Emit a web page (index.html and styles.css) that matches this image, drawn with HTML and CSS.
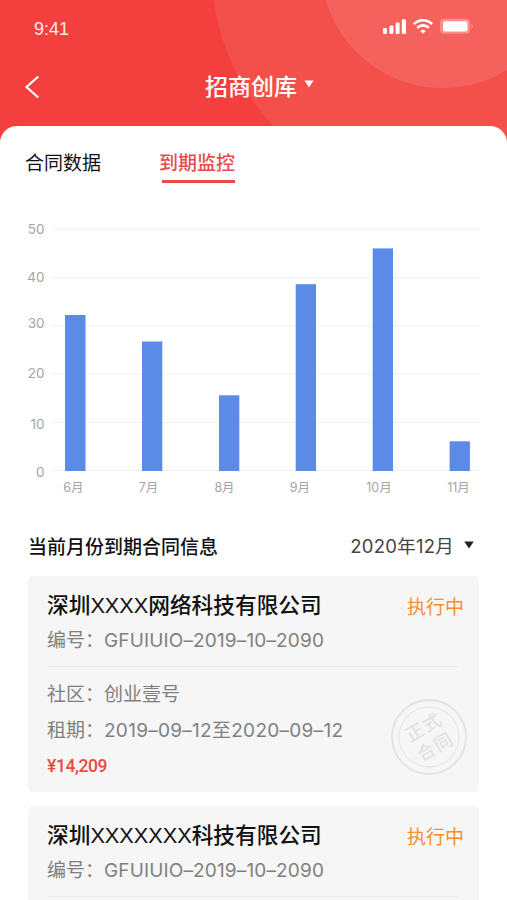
FILE: index.html
```html
<!DOCTYPE html>
<html lang="zh-CN">

<head>
    <meta charset="UTF-8">
    <meta name="viewport" content="width=device-width, initial-scale=1.0">
    <title>招商创库 - 到期监控</title>
    <link rel="stylesheet" href="styles.css">
</head>

<body>
    <div class="app">
        <header class="header">
            <div class="status-bar">
                <span class="time">9:41</span>
                <svg class="status-icons" width="94" height="18" viewBox="0 0 94 18">
                    <rect x="1" y="11" width="4" height="6" rx="1.2" />
                    <rect x="7.4" y="8.5" width="4" height="8.5" rx="1.2" />
                    <rect x="13.6" y="5.5" width="4" height="11.5" rx="1.2" />
                    <rect x="19.8" y="2.3" width="4.2" height="14.7" rx="1.2" />
                    <g class="wifi">
                        <path d="M31.8 7.1a12.8 12.8 0 0 1 18.4 0" />
                        <path d="M35.2 10.8a8.2 8.2 0 0 1 11.6 0" />
                    </g>
                    <path d="M41 16.8l-2.7-2.8a3.8 3.8 0 0 1 5.4 0z" />
                    <rect class="battery-shell" x="58" y="1.8" width="30" height="15" rx="4" />
                    <rect x="61" y="4.2" width="24.5" height="10.4" rx="1.8" />
                    <path class="battery-shell" d="M89.3 6.8v5a2.8 2.8 0 0 0 0-5z" />
                </svg>
            </div>
            <div class="nav-bar">
                <svg class="back" width="16" height="24" viewBox="0 0 16 24">
                    <path d="M14.3 1.5L2.5 12l11.8 10.5" />
                </svg>
                <h1 class="nav-title">招商创库</h1>
                <svg class="nav-arrow" width="10" height="8" viewBox="0 0 10 8">
                    <path d="M.5 .5h9L5 7.5z" />
                </svg>
            </div>
        </header>

        <main class="panel">
            <nav class="tabs">
                <a class="tab">合同数据</a>
                <a class="tab active">到期监控</a>
            </nav>

            <svg class="chart" width="507" height="290" viewBox="0 0 507 290">
                <g class="grid-lines">
                    <path d="M52 19.2H480M52 67.8H480M52 116H480M52 164H480M52 212.4H480M52 260.5H480" />
                </g>
                <g class="y-labels">
                    <text x="44.5" y="24">50</text>
                    <text x="44.5" y="72">40</text>
                    <text x="44.5" y="117.5">30</text>
                    <text x="44.5" y="168">20</text>
                    <text x="44.5" y="219">10</text>
                    <text x="44.5" y="266.5">0</text>
                </g>
                <g class="bars">
                    <rect x="65" y="105" width="20.5" height="156" />
                    <rect x="142" y="131.5" width="20.3" height="129.5" />
                    <rect x="219" y="185.3" width="20.3" height="75.7" />
                    <rect x="295.7" y="74.2" width="20.3" height="186.8" />
                    <rect x="372.7" y="38.4" width="20.3" height="222.6" />
                    <rect x="449.6" y="231.3" width="20.3" height="29.7" />
                </g>
                <g class="x-labels">
                    <text x="73.5" y="282">6月</text>
                    <text x="148.5" y="282">7月</text>
                    <text x="224.5" y="282">8月</text>
                    <text x="300" y="282">9月</text>
                    <text x="379" y="282">10月</text>
                    <text x="458.5" y="282">11月</text>
                </g>
            </svg>

            <div class="section-head">
                <h2>当前月份到期合同信息</h2>
                <div class="month-picker">
                    <span>2020年12月</span>
                    <svg width="10" height="8" viewBox="0 0 10 8">
                        <path d="M.2 .5h9.6L5 7.5z" />
                    </svg>
                </div>
            </div>

            <section class="card">
                <div class="card-head">
                    <h3>深圳XXXX网络科技有限公司</h3>
                    <span class="status">执行中</span>
                </div>
                <p class="number"><span class="label">编号：</span><span class="code">GFUIUIO–2019–10–2090</span></p>
                <div class="card-body">
                    <p><span class="label">社区：</span>创业壹号</p>
                    <p><span class="label">租期：</span><span class="dates">2019–09–12至2020–09–12</span></p>
                    <p class="price">¥14,209</p>
                    <svg class="stamp" width="78" height="78" viewBox="0 0 78 78">
                        <circle class="ring-outer" cx="39" cy="39" r="37" />
                        <circle class="ring-inner" cx="39" cy="39" r="30" />
                        <g transform="rotate(-30 39 39)">
                            <text x="39.5" y="34.5">正式</text>
                            <text x="39.5" y="57">合同</text>
                        </g>
                    </svg>
                </div>
            </section>

            <section class="card">
                <div class="card-head">
                    <h3>深圳XXXXXXX科技有限公司</h3>
                    <span class="status">执行中</span>
                </div>
                <p class="number"><span class="label">编号：</span><span class="code">GFUIUIO–2019–10–2090</span></p>
                <div class="card-body"></div>
            </section>
        </main>
    </div>
</body>

</html>
```
FILE: styles.css
```css
:root {
    --primary-color: #f3403e;
    --tab-color: #e94b4a;
    --status-color: #f98d33;
    --bar-color: #5b8be6;
    --card-bg: #f6f6f6;
    --text-color: #111111;
    --muted-color: #808080;
}

* {
    margin: 0;
    padding: 0;
    box-sizing: border-box;
}

body {
    background-color: #fff;
    color: var(--text-color);
    font-family: Inter, 'Noto Sans CJK SC', sans-serif;
}

.app {
    height: 900px;
    overflow: hidden;
}

.header {
    height: 146px;
    color: #fff;
    background-color: var(--primary-color);
    background-image:
        radial-gradient(circle at 443px -34px, rgba(255, 255, 255, 0.1) 121.5px, transparent 122.5px),
        radial-gradient(circle at 451px -35px, #f4504b 239.5px, transparent 240.5px);
}

.status-bar {
    display: flex;
    justify-content: space-between;
    height: 58px;
    padding: 17px 31px 0 34px;
}

.time {
    font-family: 'Liberation Sans', sans-serif;
    font-size: 18px;
    line-height: 25px;
    opacity: 0.9;
}

.status-icons {
    fill: #fff;
}

.wifi {
    fill: none;
    stroke: #fff;
    stroke-width: 2.6;
}

.battery-shell {
    fill: rgba(255, 255, 255, 0.28);
}

.nav-bar {
    display: flex;
    align-items: center;
    height: 57px;
    padding-left: 24px;
}

.back {
    fill: none;
    stroke: #fff;
    stroke-width: 2.2;
}

.nav-title {
    margin: 0 7px 0 165px;
    font-size: 23px;
    font-weight: 500;
    line-height: 34px;
}

.nav-arrow {
    margin-bottom: 5px;
    fill: #fff;
}

.panel {
    margin-top: -20px;
    background-color: #fff;
    border-radius: 17px 17px 0 0;
}

.tabs {
    display: flex;
    gap: 58px;
    height: 84px;
    padding: 21px 25px 0;
}

.tab {
    height: 36px;
    font-size: 19px;
    line-height: 33px;
}

.tab.active {
    color: var(--tab-color);
    font-weight: 500;
    background: linear-gradient(var(--tab-color), var(--tab-color)) 3px 33px / 74px 3px no-repeat;
}

.chart {
    display: block;
}

.grid-lines {
    stroke: #eeeff0;
}

.bars {
    fill: var(--bar-color);
}

.y-labels,
.x-labels {
    fill: #a5a5a5;
    font-size: 13.5px;
}

.y-labels {
    text-anchor: end;
}

.x-labels {
    font-size: 12.5px;
    text-anchor: middle;
}

.section-head {
    display: flex;
    justify-content: space-between;
    align-items: center;
    height: 76px;
    padding: 14px 33px 0 28px;
}

.section-head h2 {
    font-size: 19px;
    font-weight: 500;
}

.month-picker {
    display: flex;
    align-items: center;
    gap: 10px;
    color: #444;
    font-size: 18.5px;
    letter-spacing: 0.25px;
}

.month-picker svg {
    fill: #222;
}

.card {
    height: 216px;
    margin: 0 28px 14px;
    padding: 14px 15px 0 19px;
    background-color: var(--card-bg);
    border-radius: 5px;
}

.card-head {
    display: flex;
    justify-content: space-between;
    height: 31px;
}

.card-head h3 {
    font-family: 'Liberation Sans', 'Noto Sans CJK SC', sans-serif;
    font-size: 21.7px;
    font-weight: 500;
    line-height: 32px;
}

.status {
    color: var(--status-color);
    font-size: 19px;
    line-height: 35px;
}

.card p {
    color: var(--muted-color);
    font-size: 19px;
    line-height: 36px;
    white-space: nowrap;
}

.label {
    display: inline-block;
    width: 57px;
}

.card .number {
    height: 45px;
    line-height: 40px;
}

.code {
    letter-spacing: 0.15px;
}

.dates {
    letter-spacing: 0.28px;
}

.card-body {
    position: relative;
    margin-right: 6px;
    padding-top: 10px;
    border-top: 1px solid #ebebeb;
}

.card .price {
    color: #ed4842;
    font-family: Roboto, sans-serif;
    font-size: 17.5px;
    font-weight: 500;
    line-height: 35px;
    letter-spacing: -0.4px;
}

.stamp {
    position: absolute;
    right: -9.5px;
    top: 31px;
    fill: none;
    stroke: #e3e3e3;
}

.ring-outer {
    stroke-width: 1.8;
}

.stamp text {
    fill: #e2e2e2;
    stroke: none;
    font-size: 18px;
    font-weight: 500;
    letter-spacing: 1.5px;
    text-anchor: middle;
}
```
